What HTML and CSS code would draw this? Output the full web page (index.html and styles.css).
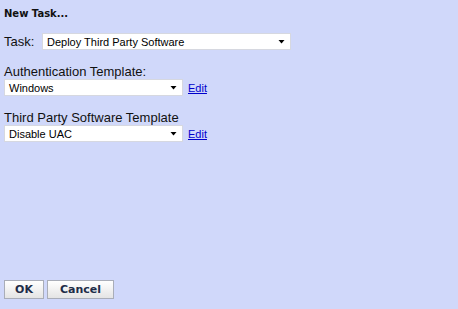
FILE: index.html
```html
<!DOCTYPE html>
<html lang="en">
<head>
  <meta charset="UTF-8">
  <title>New Task</title>
  <link rel="stylesheet" href="styles.css">
</head>
<body>
<div class="dialog">
  <div class="title">New Task...</div>

  <div class="task-row">
    <span class="label">Task:</span>
    <div class="select wide">
      <span>Deploy Third Party Software</span>
      <svg class="arrow" width="7" height="4" viewBox="0 0 7 4"><polygon points="0.5,0 6.5,0 3.5,3.5" fill="#000"/></svg>
    </div>
  </div>

  <div class="field">
    <div class="label">Authentication Template:</div>
    <div class="field-row">
      <div class="select">
        <span>Windows</span>
        <svg class="arrow" width="7" height="4" viewBox="0 0 7 4"><polygon points="0.5,0 6.5,0 3.5,3.5" fill="#000"/></svg>
      </div>
      <a class="edit" href="#">Edit</a>
    </div>
  </div>

  <div class="field">
    <div class="label">Third Party Software Template</div>
    <div class="field-row">
      <div class="select">
        <span>Disable UAC</span>
        <svg class="arrow" width="7" height="4" viewBox="0 0 7 4"><polygon points="0.5,0 6.5,0 3.5,3.5" fill="#000"/></svg>
      </div>
      <a class="edit" href="#">Edit</a>
    </div>
  </div>

  <div class="buttons">
    <button class="btn ok">OK</button>
    <button class="btn cancel">Cancel</button>
  </div>
</div>
</body>
</html>
```

FILE: styles.css
```css
html, body{margin:0; padding:0; height:100%; background:#d0d8fa;}
.dialog{
  height:100%;
  box-sizing:border-box;
  padding:7px 4px 10px 4px;
  display:flex;
  flex-direction:column;
  font-family:"Liberation Sans", Arial, sans-serif;
  color:#000;
}
.title{font-family:"DejaVu Sans", Verdana, sans-serif; font-weight:bold; font-size:10px; line-height:13px; color:#111;}
.task-row{display:flex; align-items:center; margin-top:13px;}
.task-row .label{width:38px;}
.label{font-size:13px; line-height:15px; color:#111;}
.field{margin-top:14px;}
.field-row{display:flex; align-items:center; gap:5px;}
.select{
  box-sizing:border-box;
  width:179px;
  height:17px;
  background:#fff;
  border:1px solid #d6d8e0;
  display:flex;
  align-items:center;
  justify-content:space-between;
  padding:0 5px 0 4px;
  font-size:11px;
}
.select.wide{width:249px;}
.arrow{display:block;}
.edit{font-size:11px; color:#0000cc; text-decoration:underline;}
.buttons{margin-top:auto; display:flex; gap:3px;}
.btn{
  height:19px;
  padding:0;
  border:1px solid #a9adb8;
  background:linear-gradient(#ffffff, #e4e4e4);
  font-family:"DejaVu Sans", Verdana, sans-serif;
  font-weight:bold;
  font-size:11px;
  color:#1e2c48;
  cursor:pointer;
}
.btn.ok{width:40px;}
.btn.cancel{width:67px;}
```
